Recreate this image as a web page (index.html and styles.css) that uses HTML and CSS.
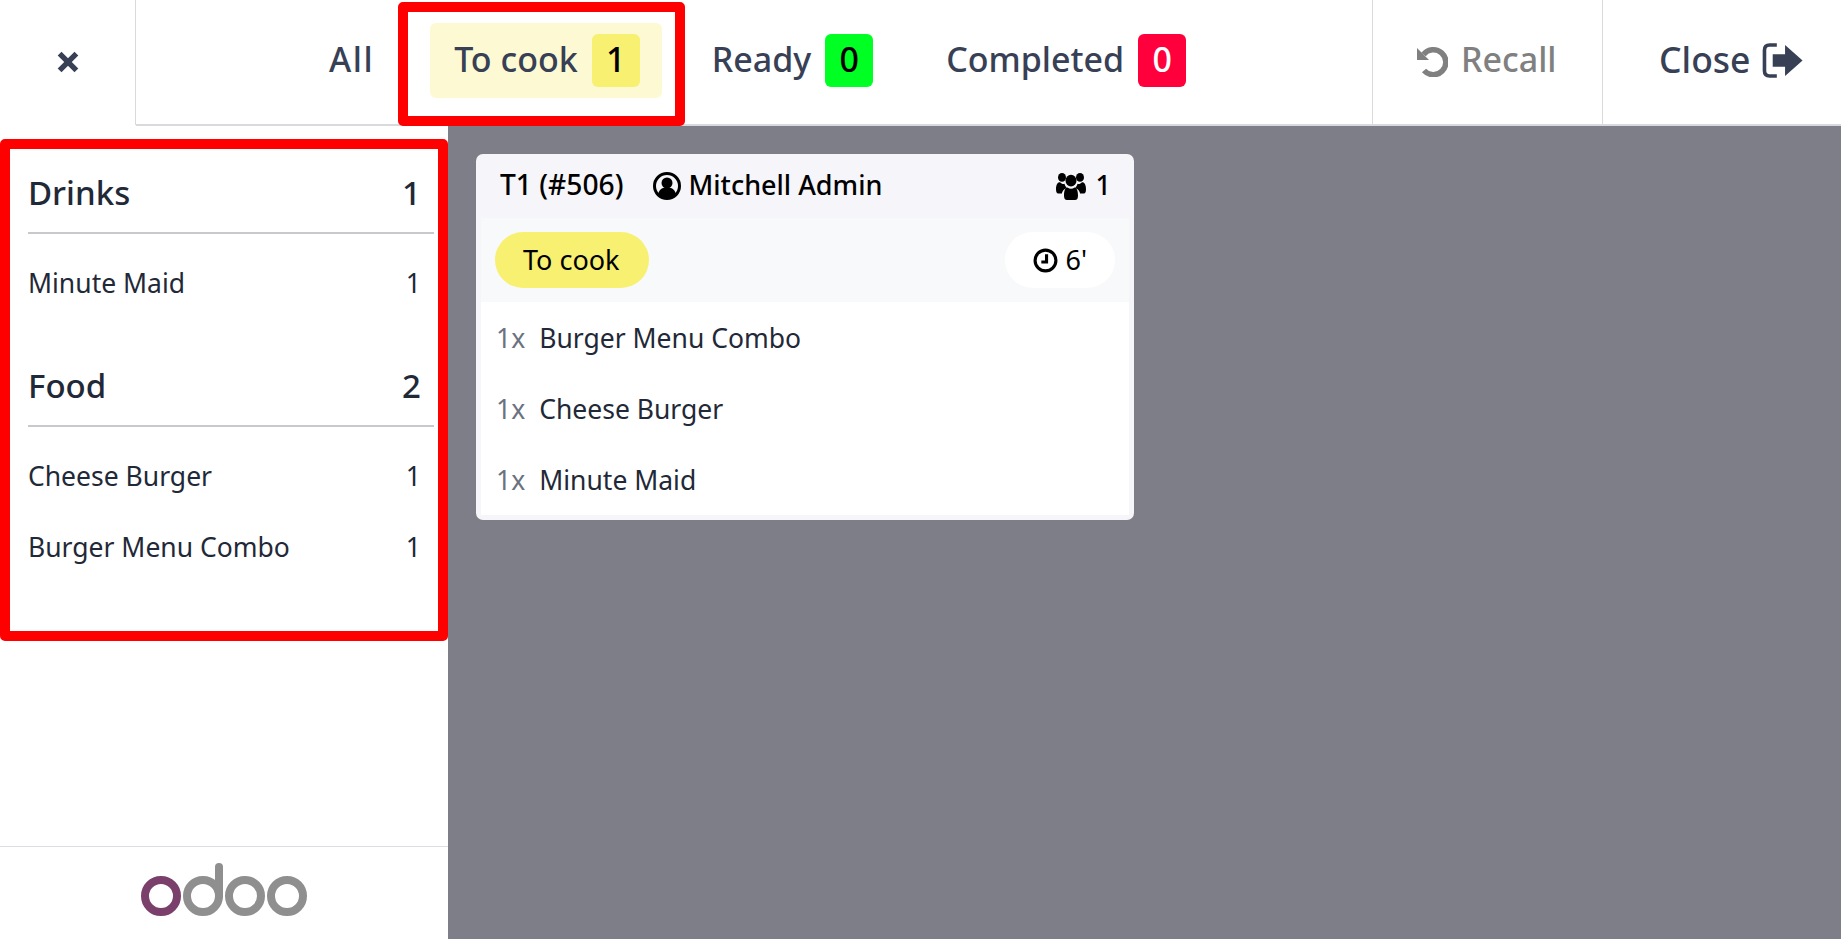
FILE: index.html
```html
<!DOCTYPE html>
<html lang="en">
<head>
  <meta charset="UTF-8">
  <meta name="viewport" content="width=device-width, initial-scale=1.0">
  <title>Kitchen Display</title>
  <link rel="stylesheet" href="styles.css">
</head>
<body>
  <header class="topbar">
    <button class="back-button" aria-label="Close">
      <svg class="back-icon" viewBox="0 0 20 20"><path d="M3 3 L17 17 M17 3 L3 17"/></svg>
    </button>
    <nav class="tabs">
      <a class="tab tab-all"><span class="label">All</span></a>
      <a class="tab tab-cook is-active"><span class="label">To cook</span> <span class="badge badge-cook">1</span></a>
      <a class="tab tab-ready"><span class="label">Ready</span> <span class="badge badge-ready">0</span></a>
      <a class="tab tab-done"><span class="label">Completed</span> <span class="badge badge-done">0</span></a>
    </nav>
    <button class="action action-recall">
      <svg class="recall-icon" viewBox="0 0 32 32">
        <path class="recall-arc" d="M7.5 9.5 A12.5 12.5 0 1 1 8 25.5"/>
        <path class="recall-head" d="M1 3 L13 15 L1 15 Z"/>
      </svg>
      <span class="label">Recall</span>
    </button>
    <button class="action action-close">
      <span class="label">Close</span>
      <svg class="close-icon" viewBox="0 0 40 34">
        <path class="close-door" d="M14 2 H7 Q2 2 2 7 V27 Q2 32 7 32 H14"/>
        <path class="close-arrow" d="M10 11 H22 V2 L39 17 L22 32 V23 H10 Z"/>
      </svg>
    </button>
  </header>

  <div class="layout">
    <aside class="sidebar">
      <section class="summary">
        <div class="category">
          <div class="category-head"><span>Drinks</span><span>1</span></div>
          <div class="category-items">
            <div class="category-item"><span class="label">Minute Maid</span><span class="label">1</span></div>
          </div>
        </div>
        <div class="category">
          <div class="category-head"><span>Food</span><span>2</span></div>
          <div class="category-items">
            <div class="category-item"><span class="label">Cheese Burger</span><span class="label">1</span></div>
            <div class="category-item"><span class="label">Burger Menu Combo</span><span class="label">1</span></div>
          </div>
        </div>
      </section>
      <footer class="sidebar-footer">
        <svg class="logo" viewBox="0 0 166 53">
          <circle class="logo-purple" cx="20" cy="33" r="16"/>
          <circle class="logo-grey" cx="62" cy="33" r="16"/>
          <path class="logo-stem" d="M78 4 V33"/>
          <circle class="logo-grey" cx="104" cy="33" r="16"/>
          <circle class="logo-grey" cx="146" cy="33" r="16"/>
        </svg>
      </footer>
    </aside>

    <main class="board">
      <article class="ticket">
        <div class="ticket-head">
          <span class="ticket-ref label">T1 (#506)</span>
          <span class="ticket-user">
            <svg class="user-icon" viewBox="0 0 28 28">
              <circle class="user-ring" cx="14" cy="14" r="12.5"/>
              <circle cx="14" cy="11" r="5.5"/>
              <path d="M5 22.5 C6 17.5 9 16 11 16 H17 C19 16 22 17.5 23 22.5 C18 27 10 27 5 22.5 Z"/>
            </svg>
            <span class="label">Mitchell Admin</span>
          </span>
          <span class="ticket-guests">
            <svg class="guests-icon" viewBox="0 0 30 26" preserveAspectRatio="none">
              <circle cx="6" cy="5" r="4"/>
              <circle cx="24" cy="5" r="4"/>
              <circle cx="15" cy="8" r="5.5"/>
              <path d="M0 16 C0 11 2 9.5 4 9.5 C5.5 11 7 11.5 8.5 11 C9 13 10 14 11 15 C8 15.5 6 18 6 20 H2 C1 20 0 19 0 16 Z"/>
              <path d="M30 16 C30 11 28 9.5 26 9.5 C24.5 11 23 11.5 21.5 11 C21 13 20 14 19 15 C22 15.5 24 18 24 20 H28 C29 20 30 19 30 16 Z"/>
              <path d="M8 22 C8 17 9.5 14.5 11.5 14.5 C13.5 16 16.5 16 18.5 14.5 C20.5 14.5 22 17 22 22 C22 24.5 21 26 19 26 H11 C9 26 8 24.5 8 22 Z"/>
            </svg>
            <span class="label">1</span>
          </span>
        </div>
        <div class="ticket-status">
          <span class="status-pill"><span class="label">To cook</span></span>
          <span class="timer-pill">
            <svg class="clock-icon" viewBox="0 0 24 24">
              <circle cx="12" cy="12" r="10"/>
              <path d="M13 6 V13.5 H8"/>
            </svg>
            <span class="label">6'</span>
          </span>
        </div>
        <ul class="ticket-lines">
          <li class="ticket-line"><span class="line-qty label">1x</span> <span class="label">Burger Menu Combo</span></li>
          <li class="ticket-line"><span class="line-qty label">1x</span> <span class="label">Cheese Burger</span></li>
          <li class="ticket-line"><span class="line-qty label">1x</span> <span class="label">Minute Maid</span></li>
        </ul>
      </article>
    </main>
  </div>
</body>
</html>
```

FILE: styles.css
```css
* {
  box-sizing: border-box;
}
html, body {
  height: 100%;
}
body {
  margin: 0;
  overflow: hidden;
  background: #fff;
  color: #1f2937;
  font-family: "Noto Sans", "Open Sans", sans-serif;
  font-size: 26.5px;
}
button {
  border: none;
  background: none;
  font: inherit;
  padding: 0;
}
/* the font sits a little low in its box, lift the text */
.label {
  margin-bottom: 4px;
}

/* top bar */
.topbar {
  display: flex;
  height: 126px;
}
.back-button {
  display: flex;
  align-items: center;
  justify-content: center;
  width: 136px;
  height: 125px;
  padding-bottom: 2px;
  border-right: 1px solid #d8dadd;
}
.back-icon {
  width: 24px;
  height: 24px;
  fill: none;
  stroke: #374055;
  stroke-width: 4.5;
}
.tabs {
  display: flex;
  flex: 1;
  align-items: center;
  gap: 30px;
  padding: 0 0 3px 171px;
  border-bottom: 2px solid #d8dadd;
  font-size: 34px;
  font-weight: 500;
  color: #374055;
}
.tab {
  display: flex;
  position: relative;
  align-items: center;
  height: 75px;
  padding: 0 22px;
  border-radius: 6px;
}
.tab-all {
  letter-spacing: 1.5px;
}
.tab-cook {
  margin-left: 4px;
  padding-left: 24px;
}
.tab-ready {
  margin-left: -2px;
}
.tab-done {
  margin-left: -1px;
}
.tab.is-active {
  background: #fdfad3;
}
/* red annotation round the active tab */
.tab.is-active::after {
  content: "";
  position: absolute;
  top: -21px;
  bottom: -28px;
  left: -32px;
  right: -23px;
  border: 10px solid #f00;
  border-radius: 5px;
}
.badge {
  display: flex;
  align-items: center;
  justify-content: center;
  width: 48px;
  height: 53px;
  margin-left: 14px;
  padding-bottom: 3px;
  border-radius: 6px;
  letter-spacing: 0;
  color: #000;
}
.badge-cook {
  background: #f7f071;
}
.badge-ready {
  background: #00ff22;
}
.badge-done {
  background: #ff003d;
  color: #fff;
}
.action {
  display: flex;
  align-items: center;
  height: 126px;
  padding-bottom: 3px;
  border-left: 1px solid #d8dadd;
  border-bottom: 2px solid #d8dadd;
  font-size: 34px;
  font-weight: 500;
  color: #374055;
}
.action-recall {
  width: 230px;
  padding-left: 43px;
  color: #808080;
}
.action-close {
  width: 239px;
  padding-left: 56px;
  font-size: 35.5px;
}
.recall-icon {
  width: 32px;
  height: 32px;
  margin-right: 13px;
}
.recall-arc {
  fill: none;
  stroke: #808080;
  stroke-width: 5.5;
}
.recall-head {
  fill: #808080;
}
.close-icon {
  width: 42px;
  height: 35px;
  margin-left: 12px;
}
.close-door {
  fill: none;
  stroke: #374055;
  stroke-width: 3.5;
}
.close-arrow {
  fill: #374055;
}

/* page body */
.layout {
  display: flex;
  height: 813px;
}
.sidebar {
  display: flex;
  flex-direction: column;
  justify-content: space-between;
  width: 448px;
}
.summary {
  height: 502px;
  margin-top: 13px;
  padding: 0 4px 0 18px;
  border: 10px solid #f00;
  border-radius: 5px;
}
.category-head {
  display: flex;
  justify-content: space-between;
  padding: 23px 13px 18px 0;
  border-bottom: 2px solid #c8c8ce;
  font-size: 33px;
  font-weight: 500;
  line-height: 42px;
}
.category-items {
  padding-top: 15px;
  margin-bottom: 22px;
}
.category-item {
  display: flex;
  align-items: center;
  justify-content: space-between;
  height: 71px;
  padding-right: 13px;
}
.sidebar-footer {
  display: flex;
  justify-content: center;
  height: 93px;
  padding-top: 16px;
  border-top: 1px solid #dcdce2;
}
.logo {
  width: 166px;
  height: 53px;
  fill: none;
  stroke-width: 8;
}
.logo-purple {
  stroke: #7a3f6b;
}
.logo-grey {
  stroke: #8f8f8f;
}
.logo-stem {
  stroke: #8f8f8f;
  stroke-linecap: round;
}

/* order board */
.board {
  flex: 1;
  padding: 28px;
  background: #7e7e89;
}
.ticket {
  width: 658px;
  height: 366px;
  padding: 0 5px 5px;
  border-radius: 7px;
  background: #f5f5fa;
  color: #000;
}
.ticket-head {
  display: flex;
  align-items: center;
  height: 64px;
  padding: 0 18px 0 19px;
  font-size: 27px;
  font-weight: 500;
}
.ticket-ref {
  font-size: 28.2px;
}
.ticket-user {
  display: flex;
  align-items: center;
  margin-left: 30px;
}
.user-icon {
  width: 28px;
  height: 28px;
  margin-right: 7px;
}
.user-ring {
  fill: none;
  stroke: #000;
  stroke-width: 3;
}
.ticket-guests {
  display: flex;
  align-items: center;
  margin-left: auto;
}
.guests-icon {
  width: 30px;
  height: 28px;
  margin-right: 10px;
}
.ticket-status {
  display: flex;
  align-items: center;
  justify-content: space-between;
  height: 84px;
  padding: 0 14px;
  background: #f8f9fb;
  font-size: 27px;
}
.ticket-status .label {
  margin-bottom: 2px;
}
.status-pill {
  display: flex;
  align-items: center;
  height: 56px;
  padding: 0 29px 0 28px;
  border-radius: 28px;
  background: #f7f071;
}
.timer-pill {
  display: flex;
  align-items: center;
  height: 56px;
  padding: 0 28px;
  border-radius: 28px;
  background: #fff;
}
.clock-icon {
  width: 25px;
  height: 25px;
  margin-right: 7px;
  fill: none;
  stroke: #000;
  stroke-width: 3;
}
.ticket-lines {
  height: 213px;
  margin: 0;
  padding: 0 15px;
  list-style: none;
  background: #fff;
  color: #1f2937;
}
.ticket-line {
  display: flex;
  align-items: center;
  gap: 14px;
  height: 71px;
}
.ticket-line .label {
  margin-bottom: 0;
}
.line-qty {
  color: #6b7280;
}
```
